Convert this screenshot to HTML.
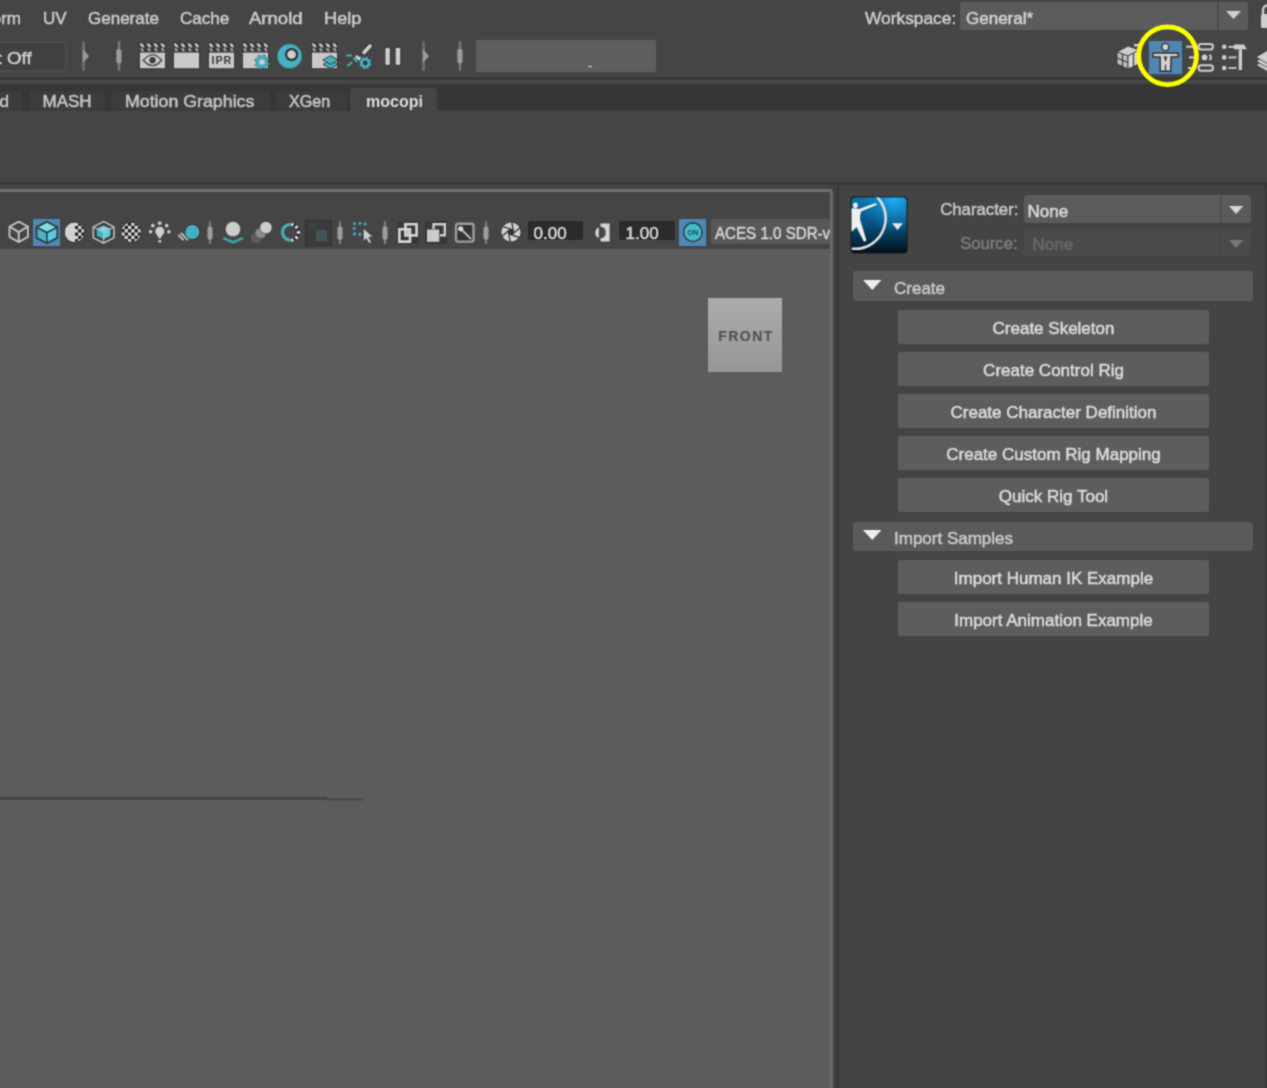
<!DOCTYPE html>
<html><head><meta charset="utf-8"><style>
html,body{margin:0;padding:0;width:1267px;height:1088px;overflow:hidden;background:#454545;}
body{position:relative;font-family:"Liberation Sans",sans-serif;}
#root{position:absolute;left:0;top:0;width:1267px;height:1088px;overflow:hidden;filter:url(#bl);}
#root>div,#root>svg{position:absolute;}
</style></head><body><svg width="0" height="0" style="position:absolute"><filter id="bl" x="0" y="0" width="100%" height="100%" color-interpolation-filters="sRGB"><feConvolveMatrix order="3" kernelMatrix="0.04 0.12 0.04 0.12 0.36 0.12 0.04 0.12 0.04" edgeMode="duplicate"/></filter></svg><div id="root">
<div style="left:0px;top:0px;width:1267px;height:77px;background:#454545;"></div>
<div style="left:0px;top:77px;width:1267px;height:3px;background:#383838;"></div>
<div style="left:0px;top:80px;width:1267px;height:4.3px;background:#464646;"></div>
<div style="left:0px;top:84.3px;width:1267px;height:26.7px;background:#373737;"></div>
<div style="left:0px;top:111px;width:1267px;height:71px;background:#454545;"></div>
<div style="left:0px;top:182px;width:1267px;height:3px;background:#383838;"></div>
<div style="left:0px;top:185px;width:1267px;height:903px;background:#444444;"></div>
<div style="left:833px;top:185px;width:434px;height:4px;background:#424242;"></div>
<div style="top:7.61px;font-size:17px;line-height:21px;color:#cbcbcb;font-weight:normal;white-space:nowrap;-webkit-text-stroke:0.5px #cbcbcb;right:1246px;">Transform</div>
<div style="top:7.61px;font-size:17px;line-height:21px;color:#cbcbcb;font-weight:normal;white-space:nowrap;-webkit-text-stroke:0.5px #cbcbcb;left:43px;">UV</div>
<div style="top:7.61px;font-size:17px;line-height:21px;color:#cbcbcb;font-weight:normal;white-space:nowrap;-webkit-text-stroke:0.5px #cbcbcb;left:88px;">Generate</div>
<div style="top:7.61px;font-size:17px;line-height:21px;color:#cbcbcb;font-weight:normal;white-space:nowrap;-webkit-text-stroke:0.5px #cbcbcb;left:180px;">Cache</div>
<div style="top:7.61px;font-size:17px;line-height:21px;color:#cbcbcb;font-weight:normal;white-space:nowrap;-webkit-text-stroke:0.5px #cbcbcb;left:249px;transform:scaleX(1.09);transform-origin:0 0;">Arnold</div>
<div style="top:7.61px;font-size:17px;line-height:21px;color:#cbcbcb;font-weight:normal;white-space:nowrap;-webkit-text-stroke:0.5px #cbcbcb;left:323.5px;transform:scaleX(1.07);transform-origin:0 0;">Help</div>
<div style="top:7.61px;font-size:17px;line-height:21px;color:#cbcbcb;font-weight:normal;white-space:nowrap;-webkit-text-stroke:0.5px #cbcbcb;left:865px;transform:scaleX(1.02);transform-origin:0 0;">Workspace:</div>
<div style="left:960px;top:1.7px;width:288px;height:28px;background:#5b5b5b;border-radius:3px;"></div>
<div style="left:1217px;top:1.7px;width:2px;height:28px;background:#4d4d4d;"></div>
<div style="top:7.61px;font-size:17px;line-height:21px;color:#d2d2d2;font-weight:normal;white-space:nowrap;-webkit-text-stroke:0.5px #d2d2d2;left:966px;">General*</div>
<svg style="left:1226px;top:11px;" width="15" height="8" viewBox="0 0 15 8"><path d="M0 0H15L7.5 8Z" fill="#d0d0d0"/></svg>
<div style="left:-6px;top:41px;width:72.6px;height:30.6px;background:#414141;border:2px solid #4b4b4b;border-radius:4px;box-sizing:border-box;"></div>
<div style="top:47.51px;font-size:17px;line-height:21px;color:#d2d2d2;font-weight:normal;white-space:nowrap;-webkit-text-stroke:0.5px #d2d2d2;left:-2px;">:</div>
<div style="top:47.51px;font-size:17px;line-height:21px;color:#d2d2d2;font-weight:normal;white-space:nowrap;-webkit-text-stroke:0.5px #d2d2d2;left:7px;transform:scaleX(1.1);transform-origin:0 0;">Off</div>
<div style="left:476px;top:40.4px;width:180px;height:32px;background:#5e5e5e;"></div>
<div style="left:-10px;top:89.7px;width:33.4px;height:21.3px;background:#3c3c3c;border-radius:3px 3px 0 0;border:1px solid #343434;border-bottom:0;box-sizing:border-box;"></div>
<div style="top:91.11px;font-size:17px;line-height:21px;color:#c6c6c6;font-weight:normal;white-space:nowrap;-webkit-text-stroke:0.5px #c6c6c6;right:1258px;">d</div>
<div style="left:27.7px;top:89.7px;width:78.1px;height:21.3px;background:#3c3c3c;border-radius:3px 3px 0 0;border:1px solid #343434;border-bottom:0;box-sizing:border-box;"></div>
<div style="top:91.11px;font-size:17px;line-height:21px;color:#c6c6c6;font-weight:normal;white-space:nowrap;-webkit-text-stroke:0.5px #c6c6c6;left:42.5px;">MASH</div>
<div style="left:110px;top:89.7px;width:161px;height:21.3px;background:#3c3c3c;border-radius:3px 3px 0 0;border:1px solid #343434;border-bottom:0;box-sizing:border-box;"></div>
<div style="top:91.11px;font-size:17px;line-height:21px;color:#c6c6c6;font-weight:normal;white-space:nowrap;-webkit-text-stroke:0.5px #c6c6c6;left:125px;transform:scaleX(1.045);transform-origin:0 0;">Motion Graphics</div>
<div style="left:275px;top:89.7px;width:72.6px;height:21.3px;background:#3c3c3c;border-radius:3px 3px 0 0;border:1px solid #343434;border-bottom:0;box-sizing:border-box;"></div>
<div style="top:91.11px;font-size:17px;line-height:21px;color:#c6c6c6;font-weight:normal;white-space:nowrap;-webkit-text-stroke:0.5px #c6c6c6;left:289px;transform:scaleX(0.95);transform-origin:0 0;">XGen</div>
<div style="left:350px;top:88px;width:87.2px;height:23px;background:#454545;border-radius:3px 3px 0 0;"></div>
<div style="top:91.95px;font-size:16px;line-height:20px;color:#dcdcdc;font-weight:bold;white-space:nowrap;left:366px;">mocopi</div>
<div style="left:0px;top:189.3px;width:833px;height:898.7px;background:#454545;"></div>
<div style="left:0px;top:189.3px;width:832px;height:2.4px;background:#6f6f6f;border-radius:0 3px 0 0;"></div>
<div style="left:830.3px;top:189.3px;width:2.7px;height:898.7px;background:#6a6a6a;border-radius:0 3px 0 0;"></div>
<div style="left:833px;top:185px;width:4.2px;height:903px;background:#414141;"></div>
<div style="left:837.2px;top:185px;width:2px;height:903px;background:#383838;"></div>
<div style="left:0px;top:249.4px;width:830.3px;height:838.6px;background:#5c5c5c;"></div>
<div style="left:0px;top:797.4px;width:326.5px;height:2.6px;background:#464646;"></div>
<div style="left:326.5px;top:798.3px;width:36.6px;height:2.6px;background:#4e4e4e;"></div>
<div style="left:708px;top:298.4px;width:73.5px;height:73.4px;background:linear-gradient(#acacac,#969696);"></div>
<div style="top:326.75px;font-size:14px;line-height:18px;color:#535353;font-weight:bold;white-space:nowrap;-webkit-text-stroke:0.2px #535353;letter-spacing:1.5px;left:246px;width:1000px;text-align:center;">FRONT</div>
<div style="left:528px;top:221.3px;width:55.2px;height:19px;background:#2b2b2b;border-radius:2px;"></div>
<div style="top:222.81px;font-size:17px;line-height:21px;color:#d6d6d6;font-weight:normal;white-space:nowrap;-webkit-text-stroke:0.5px #d6d6d6;left:533.6px;">0.00</div>
<div style="left:619px;top:221.2px;width:56px;height:19.3px;background:#2b2b2b;border-radius:2px;"></div>
<div style="top:222.81px;font-size:17px;line-height:21px;color:#d6d6d6;font-weight:normal;white-space:nowrap;-webkit-text-stroke:0.5px #d6d6d6;left:625.5px;">1.00</div>
<div style="left:679.4px;top:219px;width:27.1px;height:27px;background:#5088b3;"></div>
<div style="left:711.3px;top:219.2px;width:119px;height:24.7px;background:#585858;border-radius:3px 0 0 3px;"></div>
<div style="left:711px;top:219px;width:119.3px;height:26px;overflow:hidden;">
<div style="top:4.31px;font-size:17px;line-height:21px;color:#d4d4d4;font-weight:normal;white-space:nowrap;-webkit-text-stroke:0.5px #d4d4d4;left:4px;transform:scaleX(0.89);transform-origin:0 0;position:absolute;">ACES 1.0 SDR-video</div>
</div>
<div style="left:1265px;top:185px;width:2px;height:903px;background:#393939;"></div>
<div style="top:199.21px;font-size:17px;line-height:21px;color:#c8c8c8;font-weight:normal;white-space:nowrap;-webkit-text-stroke:0.5px #c8c8c8;right:249px;transform:scaleX(0.985);transform-origin:100% 0;">Character:</div>
<div style="top:233.11px;font-size:17px;line-height:21px;color:#7c7c7c;font-weight:normal;white-space:nowrap;-webkit-text-stroke:0.5px #7c7c7c;right:249px;transform:scaleX(0.98);transform-origin:100% 0;">Source:</div>
<div style="left:1024px;top:195px;width:226.7px;height:28.3px;background:#5b5b5b;border-radius:3px;"></div>
<div style="left:1220px;top:195px;width:2px;height:28.3px;background:#4f4f4f;"></div>
<div style="top:201.21px;font-size:17px;line-height:21px;color:#dadada;font-weight:normal;white-space:nowrap;-webkit-text-stroke:0.5px #dadada;left:1027.5px;">None</div>
<svg style="left:1229px;top:206.2px;" width="14.3" height="8" viewBox="0 0 14.3 8"><path d="M0 0H14.3L7.15 8Z" fill="#d6d6d6"/></svg>
<div style="left:1024px;top:228.6px;width:226.7px;height:27.3px;background:#4a4a4a;border-radius:3px;"></div>
<div style="left:1220px;top:228.6px;width:2px;height:27.3px;background:#474747;"></div>
<div style="top:234.41px;font-size:17px;line-height:21px;color:#686868;font-weight:normal;white-space:nowrap;-webkit-text-stroke:0.5px #686868;left:1032.5px;">None</div>
<svg style="left:1229px;top:239.5px;" width="14.3" height="8" viewBox="0 0 14.3 8"><path d="M0 0H14.3L7.15 8Z" fill="#787878"/></svg>
<div style="left:853.4px;top:271.3px;width:399.6px;height:29.3px;background:#5a5a5a;border-radius:3px;"></div>
<svg style="left:862.5px;top:279.5px;" width="18.5" height="10" viewBox="0 0 18.5 10"><path d="M0 0H18.5L9.25 10Z" fill="#eeeeee"/></svg>
<div style="top:277.61px;font-size:17px;line-height:21px;color:#cacaca;font-weight:normal;white-space:nowrap;-webkit-text-stroke:0.5px #cacaca;left:894px;">Create</div>
<div style="left:898.2px;top:310.0px;width:310.6px;height:34.2px;background:#5d5d5d;border-radius:2px;"></div>
<div style="top:318.01px;font-size:17px;line-height:21px;color:#dcdcdc;font-weight:normal;white-space:nowrap;-webkit-text-stroke:0.5px #dcdcdc;left:553.5px;width:1000px;text-align:center;">Create Skeleton</div>
<div style="left:898.2px;top:351.9px;width:310.6px;height:34.2px;background:#5d5d5d;border-radius:2px;"></div>
<div style="top:359.91px;font-size:17px;line-height:21px;color:#dcdcdc;font-weight:normal;white-space:nowrap;-webkit-text-stroke:0.5px #dcdcdc;left:553.5px;width:1000px;text-align:center;">Create Control Rig</div>
<div style="left:898.2px;top:393.8px;width:310.6px;height:34.2px;background:#5d5d5d;border-radius:2px;"></div>
<div style="top:401.81px;font-size:17px;line-height:21px;color:#dcdcdc;font-weight:normal;white-space:nowrap;-webkit-text-stroke:0.5px #dcdcdc;left:553.5px;width:1000px;text-align:center;">Create Character Definition</div>
<div style="left:898.2px;top:435.7px;width:310.6px;height:34.2px;background:#5d5d5d;border-radius:2px;"></div>
<div style="top:443.71px;font-size:17px;line-height:21px;color:#dcdcdc;font-weight:normal;white-space:nowrap;-webkit-text-stroke:0.5px #dcdcdc;left:553.5px;width:1000px;text-align:center;">Create Custom Rig Mapping</div>
<div style="left:898.2px;top:477.6px;width:310.6px;height:34.2px;background:#5d5d5d;border-radius:2px;"></div>
<div style="top:485.61px;font-size:17px;line-height:21px;color:#dcdcdc;font-weight:normal;white-space:nowrap;-webkit-text-stroke:0.5px #dcdcdc;left:553.5px;width:1000px;text-align:center;">Quick Rig Tool</div>
<div style="left:853.4px;top:521.5px;width:399.6px;height:29.3px;background:#5a5a5a;border-radius:3px;"></div>
<svg style="left:862.5px;top:529.7px;" width="18.5" height="10" viewBox="0 0 18.5 10"><path d="M0 0H18.5L9.25 10Z" fill="#eeeeee"/></svg>
<div style="top:527.81px;font-size:17px;line-height:21px;color:#cacaca;font-weight:normal;white-space:nowrap;-webkit-text-stroke:0.5px #cacaca;left:894px;">Import Samples</div>
<div style="left:898.2px;top:560.2px;width:310.6px;height:34.2px;background:#5d5d5d;border-radius:2px;"></div>
<div style="top:568.21px;font-size:17px;line-height:21px;color:#dcdcdc;font-weight:normal;white-space:nowrap;-webkit-text-stroke:0.5px #dcdcdc;left:553.5px;width:1000px;text-align:center;">Import Human IK Example</div>
<div style="left:898.2px;top:601.6px;width:310.6px;height:34.2px;background:#5d5d5d;border-radius:2px;"></div>
<div style="top:609.61px;font-size:17px;line-height:21px;color:#dcdcdc;font-weight:normal;white-space:nowrap;-webkit-text-stroke:0.5px #dcdcdc;left:553.5px;width:1000px;text-align:center;">Import Animation Example</div>
<svg style="left:81.5px;top:41.3px;" width="9" height="31" viewBox="0 0 9 31"><rect x="0" y="0" width="3" height="30" rx="1.5" fill="#6b6b6b"/><path d="M1 8 L7 15.2 L1 21.5Z" fill="#9a9a9a"/></svg>
<svg style="left:116px;top:41.3px;" width="7" height="31" viewBox="0 0 7 31"><rect x="1.8" y="0" width="2.4" height="30" rx="1.2" fill="#7a7a7a"/><rect x="0.3" y="8" width="5.2" height="14.5" rx="2" fill="#9c9c9c"/></svg>
<svg style="left:137.7px;top:41.4px;" width="29" height="29" viewBox="0 0 29 29"><g transform="translate(2,2)"><clipPath id="cb85"><rect x="0" y="-1" width="25" height="28"/></clipPath><rect x="-1" y="-1" width="27" height="27.5" rx="2" fill="#2c2c2c" opacity="0.45"/><rect x="0" y="9.6" width="25" height="15.6" fill="#c9c9c9"/><path clip-path="url(#cb85)" d="M-0.6 0.4H2.4 L4.8 4.3H1.7999999999999998Z" fill="#c9c9c9"/><path clip-path="url(#cb85)" d="M0.10000000000000009 5.3H2.8 L4.1 8.3H1.4Z" fill="#c9c9c9" opacity="0.75"/><path clip-path="url(#cb85)" d="M6.300000000000001 0.4H9.3 L11.7 4.3H8.7Z" fill="#c9c9c9"/><path clip-path="url(#cb85)" d="M7.0 5.3H9.7 L11.0 8.3H8.3Z" fill="#c9c9c9" opacity="0.75"/><path clip-path="url(#cb85)" d="M13.200000000000001 0.4H16.2 L18.6 4.3H15.600000000000001Z" fill="#c9c9c9"/><path clip-path="url(#cb85)" d="M13.9 5.3H16.6 L17.9 8.3H15.200000000000001Z" fill="#c9c9c9" opacity="0.75"/><path clip-path="url(#cb85)" d="M20.099999999999998 0.4H23.099999999999998 L25.5 4.3H22.5Z" fill="#c9c9c9"/><path clip-path="url(#cb85)" d="M20.8 5.3H23.5 L24.799999999999997 8.3H22.099999999999998Z" fill="#c9c9c9" opacity="0.75"/><path d="M3.3 17.2 Q12.5 6.5 21.7 17.2 Q12.5 28 3.3 17.2Z" fill="none" stroke="#444" stroke-width="1.4"/><circle cx="12.5" cy="17.2" r="3.1" fill="#3a3a3a"/></g></svg>
<svg style="left:172.3px;top:41.4px;" width="29" height="29" viewBox="0 0 29 29"><g transform="translate(2,2)"><clipPath id="cb86"><rect x="0" y="-1" width="25" height="28"/></clipPath><rect x="-1" y="-1" width="27" height="27.5" rx="2" fill="#2c2c2c" opacity="0.45"/><rect x="0" y="9.6" width="25" height="15.6" fill="#c9c9c9"/><path clip-path="url(#cb86)" d="M-0.6 0.4H2.4 L4.8 4.3H1.7999999999999998Z" fill="#c9c9c9"/><path clip-path="url(#cb86)" d="M0.10000000000000009 5.3H2.8 L4.1 8.3H1.4Z" fill="#c9c9c9" opacity="0.75"/><path clip-path="url(#cb86)" d="M6.300000000000001 0.4H9.3 L11.7 4.3H8.7Z" fill="#c9c9c9"/><path clip-path="url(#cb86)" d="M7.0 5.3H9.7 L11.0 8.3H8.3Z" fill="#c9c9c9" opacity="0.75"/><path clip-path="url(#cb86)" d="M13.200000000000001 0.4H16.2 L18.6 4.3H15.600000000000001Z" fill="#c9c9c9"/><path clip-path="url(#cb86)" d="M13.9 5.3H16.6 L17.9 8.3H15.200000000000001Z" fill="#c9c9c9" opacity="0.75"/><path clip-path="url(#cb86)" d="M20.099999999999998 0.4H23.099999999999998 L25.5 4.3H22.5Z" fill="#c9c9c9"/><path clip-path="url(#cb86)" d="M20.8 5.3H23.5 L24.799999999999997 8.3H22.099999999999998Z" fill="#c9c9c9" opacity="0.75"/></g></svg>
<svg style="left:206.8px;top:41.4px;" width="29" height="29" viewBox="0 0 29 29"><g transform="translate(2,2)"><clipPath id="cb87"><rect x="0" y="-1" width="25" height="28"/></clipPath><rect x="-1" y="-1" width="27" height="27.5" rx="2" fill="#2c2c2c" opacity="0.45"/><rect x="0" y="9.6" width="25" height="15.6" fill="#c9c9c9"/><path clip-path="url(#cb87)" d="M-0.6 0.4H2.4 L4.8 4.3H1.7999999999999998Z" fill="#c9c9c9"/><path clip-path="url(#cb87)" d="M0.10000000000000009 5.3H2.8 L4.1 8.3H1.4Z" fill="#c9c9c9" opacity="0.75"/><path clip-path="url(#cb87)" d="M6.300000000000001 0.4H9.3 L11.7 4.3H8.7Z" fill="#c9c9c9"/><path clip-path="url(#cb87)" d="M7.0 5.3H9.7 L11.0 8.3H8.3Z" fill="#c9c9c9" opacity="0.75"/><path clip-path="url(#cb87)" d="M13.200000000000001 0.4H16.2 L18.6 4.3H15.600000000000001Z" fill="#c9c9c9"/><path clip-path="url(#cb87)" d="M13.9 5.3H16.6 L17.9 8.3H15.200000000000001Z" fill="#c9c9c9" opacity="0.75"/><path clip-path="url(#cb87)" d="M20.099999999999998 0.4H23.099999999999998 L25.5 4.3H22.5Z" fill="#c9c9c9"/><path clip-path="url(#cb87)" d="M20.8 5.3H23.5 L24.799999999999997 8.3H22.099999999999998Z" fill="#c9c9c9" opacity="0.75"/><text x="12.9" y="21.2" text-anchor="middle" font-family="Liberation Sans" font-weight="bold" font-size="10.8" fill="#3a3a3a" letter-spacing="0.9">IPR</text></g></svg>
<svg style="left:241.2px;top:41.4px;" width="29" height="29" viewBox="0 0 29 29"><g transform="translate(2,2)"><clipPath id="cb88"><rect x="0" y="-1" width="25" height="28"/></clipPath><rect x="-1" y="-1" width="27" height="27.5" rx="2" fill="#2c2c2c" opacity="0.45"/><rect x="0" y="9.6" width="25" height="15.6" fill="#c9c9c9"/><path clip-path="url(#cb88)" d="M-0.6 0.4H2.4 L4.8 4.3H1.7999999999999998Z" fill="#c9c9c9"/><path clip-path="url(#cb88)" d="M0.10000000000000009 5.3H2.8 L4.1 8.3H1.4Z" fill="#c9c9c9" opacity="0.75"/><path clip-path="url(#cb88)" d="M6.300000000000001 0.4H9.3 L11.7 4.3H8.7Z" fill="#c9c9c9"/><path clip-path="url(#cb88)" d="M7.0 5.3H9.7 L11.0 8.3H8.3Z" fill="#c9c9c9" opacity="0.75"/><path clip-path="url(#cb88)" d="M13.200000000000001 0.4H16.2 L18.6 4.3H15.600000000000001Z" fill="#c9c9c9"/><path clip-path="url(#cb88)" d="M13.9 5.3H16.6 L17.9 8.3H15.200000000000001Z" fill="#c9c9c9" opacity="0.75"/><path clip-path="url(#cb88)" d="M20.099999999999998 0.4H23.099999999999998 L25.5 4.3H22.5Z" fill="#c9c9c9"/><path clip-path="url(#cb88)" d="M20.8 5.3H23.5 L24.799999999999997 8.3H22.099999999999998Z" fill="#c9c9c9" opacity="0.75"/><polygon points="26.45,20.51 26.01,21.93 23.92,22.31 23.18,23.21 23.20,25.33 21.88,26.03 20.14,24.82 18.98,24.93 17.49,26.45 16.07,26.01 15.69,23.92 14.79,23.18 12.67,23.20 11.97,21.88 13.18,20.14 13.07,18.98 11.55,17.49 11.99,16.07 14.08,15.69 14.82,14.79 14.80,12.67 16.12,11.97 17.86,13.18 19.02,13.07 20.51,11.55 21.93,11.99 22.31,14.08 23.21,14.82 25.33,14.80 26.03,16.12 24.82,17.86 24.93,19.02" fill="#45b1c1" stroke="#2c2c2c" stroke-opacity="0.5" stroke-width="0.8"/><circle cx="19" cy="19" r="2.6" fill="#d0d0d0"/></g></svg>
<svg style="left:276px;top:43px;" width="28" height="28" viewBox="0 0 28 28"><circle cx="13.6" cy="13.2" r="12.4" fill="#45b1c1" stroke="#2c2c2c" stroke-opacity="0.4" stroke-width="0.8"/><circle cx="15.6" cy="11.5" r="6.6" fill="#333"/><circle cx="15.6" cy="11.5" r="4.3" fill="#cfcfcf"/></svg>
<svg style="left:309.8px;top:41.4px;" width="29" height="29" viewBox="0 0 29 29"><g transform="translate(2,2)"><clipPath id="cb90"><rect x="0" y="-1" width="25" height="28"/></clipPath><rect x="-1" y="-1" width="27" height="27.5" rx="2" fill="#2c2c2c" opacity="0.45"/><rect x="0" y="9.6" width="25" height="15.6" fill="#c9c9c9"/><path clip-path="url(#cb90)" d="M-0.6 0.4H2.4 L4.8 4.3H1.7999999999999998Z" fill="#c9c9c9"/><path clip-path="url(#cb90)" d="M0.10000000000000009 5.3H2.8 L4.1 8.3H1.4Z" fill="#c9c9c9" opacity="0.75"/><path clip-path="url(#cb90)" d="M6.300000000000001 0.4H9.3 L11.7 4.3H8.7Z" fill="#c9c9c9"/><path clip-path="url(#cb90)" d="M7.0 5.3H9.7 L11.0 8.3H8.3Z" fill="#c9c9c9" opacity="0.75"/><path clip-path="url(#cb90)" d="M13.200000000000001 0.4H16.2 L18.6 4.3H15.600000000000001Z" fill="#c9c9c9"/><path clip-path="url(#cb90)" d="M13.9 5.3H16.6 L17.9 8.3H15.200000000000001Z" fill="#c9c9c9" opacity="0.75"/><path clip-path="url(#cb90)" d="M20.099999999999998 0.4H23.099999999999998 L25.5 4.3H22.5Z" fill="#c9c9c9"/><path clip-path="url(#cb90)" d="M20.8 5.3H23.5 L24.799999999999997 8.3H22.099999999999998Z" fill="#c9c9c9" opacity="0.75"/><path d="M11 21.5 L18.5 25.5 L26 21.5 L18.5 17.5Z" fill="#45b1c1" stroke="#2c2c2c" stroke-width="0.9"/><path d="M18.5 12.6 L26.2 17 L18.5 21.4 L10.8 17Z" fill="#45b1c1" stroke="#2c2c2c" stroke-width="0.9"/></g></svg>
<svg style="left:344px;top:43px;" width="30" height="28" viewBox="0 0 30 28"><line x1="26" y1="3" x2="20" y2="9.5" stroke="#333" stroke-width="5.5" stroke-linecap="round"/><line x1="26" y1="3" x2="20" y2="9.5" stroke="#cfcfcf" stroke-width="3.6" stroke-linecap="round"/><path d="M12 11.5 L18 14.5 L15.5 18.5 L10.5 14.5Z" fill="#d0d0d0" stroke="#333" stroke-width="0.8"/><line x1="3" y1="12.4" x2="7" y2="12.4" stroke="#45b1c1" stroke-width="2" stroke-linecap="round"/><line x1="10" y1="15.5" x2="12.5" y2="18" stroke="#45b1c1" stroke-width="2" stroke-linecap="round"/><line x1="4" y1="22.5" x2="7.5" y2="19.7" stroke="#45b1c1" stroke-width="2" stroke-linecap="round"/><polygon points="27.77,21.31 27.39,22.55 25.57,22.88 24.93,23.65 24.95,25.50 23.80,26.11 22.29,25.05 21.28,25.15 19.99,26.47 18.75,26.09 18.42,24.27 17.65,23.63 15.80,23.65 15.19,22.50 16.25,20.99 16.15,19.98 14.83,18.69 15.21,17.45 17.03,17.12 17.67,16.35 17.65,14.50 18.80,13.89 20.31,14.95 21.32,14.85 22.61,13.53 23.85,13.91 24.18,15.73 24.95,16.37 26.80,16.35 27.41,17.50 26.35,19.01 26.45,20.02" fill="#45b1c1" stroke="#2c2c2c" stroke-opacity="0.5" stroke-width="0.8"/><circle cx="21.3" cy="20" r="2.4" fill="#3a3a3a"/></svg>
<svg style="left:383px;top:46px;" width="20" height="21" viewBox="0 0 20 21"><rect x="1.9" y="1.4" width="5.4" height="17.9" rx="1.5" fill="#d0d0d0" stroke="#2e2e2e" stroke-width="1"/><rect x="12.1" y="1.4" width="5.7" height="17.9" rx="1.5" fill="#d0d0d0" stroke="#2e2e2e" stroke-width="1"/></svg>
<svg style="left:421.5px;top:41.3px;" width="9" height="31" viewBox="0 0 9 31"><rect x="0" y="0" width="3" height="30" rx="1.5" fill="#6b6b6b"/><path d="M1 8 L7 15.2 L1 21.5Z" fill="#9a9a9a"/></svg>
<svg style="left:456.5px;top:41.3px;" width="7" height="31" viewBox="0 0 7 31"><rect x="1.8" y="0" width="2.4" height="30" rx="1.2" fill="#7a7a7a"/><rect x="0.3" y="8" width="5.2" height="14.5" rx="2" fill="#9c9c9c"/></svg>
<div style="left:588px;top:66px;width:4px;height:1px;background:#d8d8d8;"></div>
<svg style="left:1115px;top:42px;" width="30" height="30" viewBox="0 0 30 30"><path d="M2 10 L13 4 L24 8 L13 14Z" fill="#cfcfcf" stroke="#2e2e2e" stroke-width="0.8"/><path d="M2 10 L13 14 L13 27 L2 22Z" fill="#bdbdbd" stroke="#2e2e2e" stroke-width="0.8"/><path d="M13 14 L24 8 L24 22 L13 27Z" fill="#d4d4d4" stroke="#2e2e2e" stroke-width="0.8"/><line x1="7.5" y1="12" x2="7.5" y2="24.5" stroke="#3a3a3a" stroke-width="1.2"/><line x1="2" y1="16" x2="13" y2="20.5" stroke="#3a3a3a" stroke-width="1.2"/><line x1="18.5" y1="11" x2="18.5" y2="24.5" stroke="#3a3a3a" stroke-width="1.2"/><rect x="19" y="2" width="6" height="2.4" fill="#cfcfcf"/></svg>
<div style="left:1148.8px;top:41.1px;width:33.5px;height:33.4px;background:#4f86b2;"></div>
<svg style="left:1148.8px;top:41.1px;" width="34" height="34" viewBox="0 0 34 34"><g stroke="#2f2f2f" stroke-width="1.4" fill="#d3d3d3"><circle cx="16.4" cy="6" r="3.6"/><path d="M4 12 H29 V16 H22 V23.5 H21.8 V30.3 H11.2 V23.5 V16 H4Z"/></g><line x1="16.5" y1="23.5" x2="16.5" y2="30.3" stroke="#2f2f2f" stroke-width="1.2"/><path d="M14.5 15.5 L18.5 15.5 L16.5 21Z" fill="#3a3a3a"/></svg>
<svg style="left:1185px;top:42px;" width="30" height="30" viewBox="0 0 30 30"><g stroke="#cfcfcf" stroke-width="2" fill="none"><line x1="1" y1="4.7" x2="8.5" y2="4.7"/><rect x="13.5" y="2" width="14.5" height="5.4" rx="2.7"/><line x1="4" y1="15.4" x2="9" y2="15.4"/><path d="M24.5 12.8 Q27.5 15.4 24.5 18"/><line x1="3" y1="26" x2="9" y2="26"/><rect x="13.5" y="23.3" width="14.5" height="5.4" rx="2.7"/></g><circle cx="19.5" cy="15.4" r="2.8" fill="#cfcfcf"/></svg>
<svg style="left:1220px;top:42px;" width="30" height="30" viewBox="0 0 30 30"><g fill="#cfcfcf"><circle cx="4.2" cy="4.7" r="2.3"/><circle cx="4.2" cy="15.4" r="2.3"/><circle cx="4.2" cy="26" r="2.3"/><rect x="8.5" y="4" width="6" height="1.8"/><rect x="8.5" y="14.5" width="8" height="1.8"/><rect x="8.5" y="25.1" width="8" height="1.8"/><path d="M14 2.4 H24 L27 7.3 H14Z"/><rect x="18.7" y="7.3" width="3.3" height="20.7"/></g></svg>
<svg style="left:1254px;top:42px;" width="13" height="30" viewBox="0 0 13 30"><g fill="#cfcfcf" stroke="#2e2e2e" stroke-width="0.8"><path d="M2 23 L14 16 L26 23 L14 30Z"/><path d="M2 19 L14 12 L26 19 L14 26Z"/><path d="M2 15 L14 8 L26 15 L14 22Z"/></g></svg>
<svg style="left:1259.5px;top:3px;" width="9" height="27" viewBox="0 0 9 27"><path d="M3 11 V7 A4.5 4.5 0 0 1 12 7 V11" fill="none" stroke="#cfcfcf" stroke-width="2.4"/><rect x="1" y="11" width="14" height="14" rx="1.5" fill="#cfcfcf"/></svg>
<svg style="left:1130px;top:20px;" width="76" height="72" viewBox="0 0 76 72"><circle cx="37.6" cy="35.7" r="28.9" fill="none" stroke="#ffff00" stroke-width="4.7"/></svg>
<svg style="left:4px;top:216px;" width="30" height="30" viewBox="0 0 30 30"><g fill="none" stroke="#2c2c2c" stroke-opacity="0.5" stroke-width="3.6"><polygon points="14.70,5.80 23.90,10.80 23.90,20.80 14.70,25.80 5.50,20.80 5.50,10.80"/></g><g fill="none" stroke="#c2c2c2" stroke-width="2"><polygon points="14.70,5.60 23.90,10.70 23.90,20.90 14.70,26.00 5.50,20.90 5.50,10.70"/><polyline points="5.50,10.70 14.70,16.00 23.90,10.70"/><line x1="14.7" y1="16" x2="14.7" y2="26"/></g></svg>
<div style="left:33px;top:219px;width:27px;height:27px;background:#5088b3;"></div>
<svg style="left:33px;top:219px;" width="27" height="27" viewBox="0 0 27 27"><polygon points="13.90,2.90 24.30,8.20 13.90,13.50 3.50,8.20" fill="#84dbe4"/><polygon points="3.50,8.20 13.90,13.50 13.90,24.30 3.50,19.00" fill="#46b6c6"/><polygon points="24.30,8.20 13.90,13.50 13.90,24.30 24.30,19.00" fill="#5ecbd9"/><polygon points="13.90,2.80 24.30,8.15 24.30,18.85 13.90,24.20 3.50,18.85 3.50,8.15" fill="none" stroke="#2c3a40" stroke-width="1.8"/><polyline points="3.50,8.20 13.90,13.50 24.30,8.20" fill="none" stroke="#2c3a40" stroke-width="1.6"/><line x1="13.899999999999999" y1="13.5" x2="13.899999999999999" y2="24.3" stroke="#2c3a40" stroke-width="1.6"/></svg>
<svg style="left:62px;top:220px;" width="26" height="26" viewBox="0 0 26 26"><defs><clipPath id="cc1"><circle cx="12.6" cy="12.3" r="9.7"/></clipPath></defs><circle cx="12.6" cy="12.3" r="10.7" fill="#2c2c2c" opacity="0.5"/><g clip-path="url(#cc1)"><rect x="2.9000000000000004" y="2.6000000000000014" width="19.4" height="19.4" fill="#dadada"/><rect x="2.90" y="2.60" width="3.3" height="3.3" fill="#1e1e1e"/><rect x="9.50" y="2.60" width="3.3" height="3.3" fill="#1e1e1e"/><rect x="16.10" y="2.60" width="3.3" height="3.3" fill="#1e1e1e"/><rect x="6.20" y="5.90" width="3.3" height="3.3" fill="#1e1e1e"/><rect x="12.80" y="5.90" width="3.3" height="3.3" fill="#1e1e1e"/><rect x="19.40" y="5.90" width="3.3" height="3.3" fill="#1e1e1e"/><rect x="2.90" y="9.20" width="3.3" height="3.3" fill="#1e1e1e"/><rect x="9.50" y="9.20" width="3.3" height="3.3" fill="#1e1e1e"/><rect x="16.10" y="9.20" width="3.3" height="3.3" fill="#1e1e1e"/><rect x="6.20" y="12.50" width="3.3" height="3.3" fill="#1e1e1e"/><rect x="12.80" y="12.50" width="3.3" height="3.3" fill="#1e1e1e"/><rect x="19.40" y="12.50" width="3.3" height="3.3" fill="#1e1e1e"/><rect x="2.90" y="15.80" width="3.3" height="3.3" fill="#1e1e1e"/><rect x="9.50" y="15.80" width="3.3" height="3.3" fill="#1e1e1e"/><rect x="16.10" y="15.80" width="3.3" height="3.3" fill="#1e1e1e"/><rect x="6.20" y="19.10" width="3.3" height="3.3" fill="#1e1e1e"/><rect x="12.80" y="19.10" width="3.3" height="3.3" fill="#1e1e1e"/><rect x="19.40" y="19.10" width="3.3" height="3.3" fill="#1e1e1e"/><rect x="2.9000000000000004" y="2.6000000000000014" width="10.185" height="19.4" fill="#d2d2d2"/></g></svg>
<svg style="left:90px;top:218px;" width="28" height="28" viewBox="0 0 28 28"><polygon points="13.60,3.60 23.90,8.95 23.90,19.65 13.60,25.00 3.30,19.65 3.30,8.95" fill="#3a3a3a" stroke="#b9b9b9" stroke-width="1.7"/><polygon points="13.60,5.80 22.10,10.00 13.60,14.30 5.10,10.00" fill="#7dd6e0" transform="translate(13.599999999999994 14.300000000000011) scale(0.8) translate(-13.599999999999994 -14.300000000000011)"/><polygon points="5.10,10.00 13.60,14.30 13.60,22.90 5.10,18.70" fill="#3fb3c4" transform="translate(13.599999999999994 14.300000000000011) scale(0.8) translate(-13.599999999999994 -14.300000000000011)"/><polygon points="22.10,10.00 13.60,14.30 13.60,22.90 22.10,18.70" fill="#5fd0df" transform="translate(13.599999999999994 14.300000000000011) scale(0.8) translate(-13.599999999999994 -14.300000000000011)"/><polyline points="3.30,9.00 13.60,14.30 23.90,9.00" fill="none" stroke="#b9b9b9" stroke-width="1.3"/><line x1="13.599999999999994" y1="14.300000000000011" x2="13.599999999999994" y2="25.00000000000001" stroke="#b9b9b9" stroke-width="1.3"/></svg>
<svg style="left:119px;top:220px;" width="26" height="26" viewBox="0 0 26 26"><defs><clipPath id="cc2"><circle cx="12.1" cy="12.3" r="9.8"/></clipPath></defs><circle cx="12.1" cy="12.3" r="10.8" fill="#2c2c2c" opacity="0.5"/><g clip-path="url(#cc2)"><rect x="2.299999999999999" y="2.5" width="19.6" height="19.6" fill="#dadada"/><rect x="2.30" y="2.50" width="3.3" height="3.3" fill="#1e1e1e"/><rect x="8.90" y="2.50" width="3.3" height="3.3" fill="#1e1e1e"/><rect x="15.50" y="2.50" width="3.3" height="3.3" fill="#1e1e1e"/><rect x="5.60" y="5.80" width="3.3" height="3.3" fill="#1e1e1e"/><rect x="12.20" y="5.80" width="3.3" height="3.3" fill="#1e1e1e"/><rect x="18.80" y="5.80" width="3.3" height="3.3" fill="#1e1e1e"/><rect x="2.30" y="9.10" width="3.3" height="3.3" fill="#1e1e1e"/><rect x="8.90" y="9.10" width="3.3" height="3.3" fill="#1e1e1e"/><rect x="15.50" y="9.10" width="3.3" height="3.3" fill="#1e1e1e"/><rect x="5.60" y="12.40" width="3.3" height="3.3" fill="#1e1e1e"/><rect x="12.20" y="12.40" width="3.3" height="3.3" fill="#1e1e1e"/><rect x="18.80" y="12.40" width="3.3" height="3.3" fill="#1e1e1e"/><rect x="2.30" y="15.70" width="3.3" height="3.3" fill="#1e1e1e"/><rect x="8.90" y="15.70" width="3.3" height="3.3" fill="#1e1e1e"/><rect x="15.50" y="15.70" width="3.3" height="3.3" fill="#1e1e1e"/><rect x="5.60" y="19.00" width="3.3" height="3.3" fill="#1e1e1e"/><rect x="12.20" y="19.00" width="3.3" height="3.3" fill="#1e1e1e"/><rect x="18.80" y="19.00" width="3.3" height="3.3" fill="#1e1e1e"/></g></svg>
<svg style="left:146px;top:219px;" width="26" height="26" viewBox="0 0 26 26"><g fill="#cfcfcf" stroke="#2c2c2c" stroke-opacity="0.5" stroke-width="0.8"><circle cx="6.8" cy="6.7" r="2.1"/><circle cx="13.8" cy="4.2" r="2.1"/><circle cx="20.7" cy="6.7" r="2.1"/><circle cx="4.6" cy="12.7" r="2"/><circle cx="22.9" cy="12.7" r="2"/><path d="M13.8 7.5 A4.8 4.8 0 0 1 18.6 12.3 C18.6 15 15.5 17 14.6 20 H13 C12.1 17 9 15 9 12.3 A4.8 4.8 0 0 1 13.8 7.5Z"/><rect x="12" y="21" width="3.6" height="2.8" rx="0.8"/></g></svg>
<svg style="left:175px;top:222px;" width="27" height="22" viewBox="0 0 27 22"><g stroke="#b8b8b8" stroke-width="2.2" stroke-linecap="round"><line x1="4" y1="13.5" x2="8" y2="17.5"/><line x1="6.5" y1="11.5" x2="12.5" y2="17.5"/></g><circle cx="17.3" cy="10" r="7.6" fill="#47b0bf" stroke="#2e2a2a" stroke-opacity="0.7" stroke-width="1.2"/></svg>
<svg style="left:206px;top:220.6px;" width="8" height="23.400000000000006" viewBox="0 0 8 23.400000000000006"><rect x="2.9" y="0" width="2.2" height="23.400000000000006" rx="1.1" fill="#808080"/><rect x="1.5" y="5.400000000000006" width="5" height="13.300000000000011" rx="2" fill="#9e9e9e"/></svg>
<svg style="left:220px;top:218px;" width="26" height="28" viewBox="0 0 26 28"><path d="M3.3 20 L13 24.4 L23 20" fill="none" stroke="#3fa9b8" stroke-width="2.4" stroke-linejoin="round"/><circle cx="13" cy="11.2" r="7.6" fill="#cdcdcd" stroke="#2e2e2e" stroke-opacity="0.5" stroke-width="0.8"/><path d="M9 17.5 L11 21 L12.5 17.8 L14.5 21 L16 17.6" fill="none" stroke="#555" stroke-width="0.9"/></svg>
<svg style="left:248px;top:218px;" width="27" height="28" viewBox="0 0 27 28"><circle cx="8.4" cy="19.7" r="5.6" fill="#5d5d5d"/><circle cx="12.8" cy="15" r="5.6" fill="#8c8c8c" stroke="#2e2e2e" stroke-opacity="0.5" stroke-width="0.8"/><circle cx="17.9" cy="9.6" r="6.2" fill="#cecece" stroke="#2e2e2e" stroke-opacity="0.6" stroke-width="1"/></svg>
<svg style="left:279px;top:221px;" width="24" height="24" viewBox="0 0 24 24"><path d="M11.5 3.3 A8 8 0 0 0 11.5 19.3" fill="none" stroke="#46b1c0" stroke-width="3.2"/><g fill="#e6e6e6"><circle cx="13.5" cy="3.6" r="1.6"/><circle cx="17.5" cy="6" r="1.6"/><circle cx="19.5" cy="11.3" r="1.6"/><circle cx="17.5" cy="16.6" r="1.6"/><circle cx="13.5" cy="19" r="1.6"/></g><g fill="#1e1e1e"><circle cx="15.5" cy="4.3" r="1.2"/><circle cx="19" cy="8.6" r="1.2"/><circle cx="19" cy="14" r="1.2"/><circle cx="15.5" cy="18.3" r="1.2"/></g></svg>
<div style="left:305.4px;top:219.7px;width:26.2px;height:25.9px;background:#3b3b3b;border:1.5px solid #323232;box-sizing:border-box;"></div>
<div style="left:315.8px;top:230.1px;width:11.3px;height:11px;background:#44555a;"></div>
<div style="left:309px;top:223px;width:7px;height:7px;background:#3d4345;"></div>
<svg style="left:335.8px;top:220.6px;" width="8" height="23.400000000000006" viewBox="0 0 8 23.400000000000006"><rect x="2.9" y="0" width="2.2" height="23.400000000000006" rx="1.1" fill="#808080"/><rect x="1.5" y="5.400000000000006" width="5" height="13.300000000000011" rx="2" fill="#9e9e9e"/></svg>
<svg style="left:350px;top:220px;" width="26" height="26" viewBox="0 0 26 26"><g fill="#3fb0c0"><circle cx="4.4" cy="3.6" r="1.5"/><circle cx="10" cy="3.2" r="1.5"/><circle cx="15" cy="3.8" r="1.5"/><circle cx="4.2" cy="8.5" r="1.4"/><circle cx="4.4" cy="13.9" r="1.6"/><circle cx="9.8" cy="14.2" r="1.5"/></g><path d="M13.5 8.5 L13.5 21 L16.3 18.5 L19.3 23.5 L21.3 22.2 L18.6 17.3 L22.6 16.7Z" fill="#cfcfcf" stroke="#2e2e2e" stroke-opacity="0.5" stroke-width="0.8"/></svg>
<svg style="left:380.5px;top:220.6px;" width="8" height="23.400000000000006" viewBox="0 0 8 23.400000000000006"><rect x="2.9" y="0" width="2.2" height="23.400000000000006" rx="1.1" fill="#808080"/><rect x="1.5" y="5.400000000000006" width="5" height="13.300000000000011" rx="2" fill="#9e9e9e"/></svg>
<div style="left:397.1px;top:221px;width:21.5px;height:22.7px;background:#383838;"></div>
<svg style="left:397px;top:221px;" width="22" height="23" viewBox="0 0 22 23"><rect x="8.4" y="3.2" width="11.2" height="11.2" fill="none" stroke="#d6d6d6" stroke-width="2.6"/><path d="M2.4 8.2 H13 V20.6 H2.4Z" fill="none" stroke="#d6d6d6" stroke-width="2.6"/><rect x="9.5" y="9.3" width="3.5" height="3.5" fill="#cfcfcf"/></svg>
<div style="left:425.4px;top:221px;width:21.7px;height:22.7px;background:#383838;"></div>
<svg style="left:425px;top:221px;" width="22" height="23" viewBox="0 0 22 23"><path d="M8.5 8 V3.2 H19.8 V14.2 H15" fill="none" stroke="#cfcfcf" stroke-width="2.4"/><rect x="2" y="8.5" width="12.3" height="12.3" fill="#cbcbcb"/></svg>
<svg style="left:454px;top:222px;" width="22" height="22" viewBox="0 0 22 22"><rect x="2" y="1.8" width="17.5" height="17.8" rx="2" fill="#333" stroke="#9e9e9e" stroke-width="2.4"/><line x1="6.5" y1="6.5" x2="17" y2="17" stroke="#bdbdbd" stroke-width="2"/><circle cx="6.7" cy="6.8" r="2.6" fill="#d6d6d6"/></svg>
<svg style="left:482px;top:220.6px;" width="8" height="23.400000000000006" viewBox="0 0 8 23.400000000000006"><rect x="2.9" y="0" width="2.2" height="23.400000000000006" rx="1.1" fill="#808080"/><rect x="1.5" y="5.400000000000006" width="5" height="13.300000000000011" rx="2" fill="#9e9e9e"/></svg>
<svg style="left:500px;top:221.3px;" width="22" height="22" viewBox="0 0 22 22"><circle cx="11" cy="11" r="10.2" fill="#2e2e2e" opacity="0.5"/><circle cx="11" cy="11" r="9.6" fill="#d2d2d2"/><line x1="11" y1="11" x2="20.80" y2="11.00" stroke="#333" stroke-width="1.3" transform="rotate(20 11 11) translate(0.00 2.50)"/><line x1="11" y1="11" x2="15.90" y2="19.49" stroke="#333" stroke-width="1.3" transform="rotate(20 11 11) translate(-2.17 1.25)"/><line x1="11" y1="11" x2="6.10" y2="19.49" stroke="#333" stroke-width="1.3" transform="rotate(20 11 11) translate(-2.17 -1.25)"/><line x1="11" y1="11" x2="1.20" y2="11.00" stroke="#333" stroke-width="1.3" transform="rotate(20 11 11) translate(-0.00 -2.50)"/><line x1="11" y1="11" x2="6.10" y2="2.51" stroke="#333" stroke-width="1.3" transform="rotate(20 11 11) translate(2.17 -1.25)"/><line x1="11" y1="11" x2="15.90" y2="2.51" stroke="#333" stroke-width="1.3" transform="rotate(20 11 11) translate(2.17 1.25)"/><circle cx="11" cy="11" r="3" fill="#333"/></svg>
<svg style="left:592px;top:222px;" width="20" height="22" viewBox="0 0 20 22"><path d="M8.5 1.5 H17.6 V19.6 H8.5 V16.5 A6 6 0 0 0 8.5 4.6Z" fill="#d6d6d6"/><path d="M6.8 5.6 A5.6 5.6 0 0 0 6.8 16" fill="#d6d6d6"/><path d="M4 6.5 A5 5 0 0 0 4 15" fill="none"/></svg>
<svg style="left:679.4px;top:219px;" width="27.1" height="27" viewBox="0 0 27.1 27"><circle cx="13.9" cy="13.2" r="9.3" fill="#43bcc9" stroke="#2f3f44" stroke-width="1.6"/><text x="13.9" y="16" text-anchor="middle" font-family="Liberation Sans" font-weight="bold" font-size="7.5" fill="#1f4a50">ON</text></svg>
<svg style="left:850px;top:196px;" width="58" height="58" viewBox="0 0 58 58"><defs><linearGradient id="hg" x1="0" y1="0" x2="0" y2="1"><stop offset="0" stop-color="#0c74b0"/><stop offset="0.5" stop-color="#07507c"/><stop offset="1" stop-color="#02131d"/></linearGradient>
<radialGradient id="hr" cx="0.78" cy="0.02" r="0.62"><stop offset="0" stop-color="#1cb4ff" stop-opacity="0.95"/><stop offset="0.6" stop-color="#1aa0e0" stop-opacity="0.35"/><stop offset="1" stop-color="#1aa0e0" stop-opacity="0"/></radialGradient></defs>
<clipPath id="hclip"><rect x="1.5" y="1.5" width="55" height="55" rx="3.5"/></clipPath><rect x="0.5" y="0.5" width="57" height="57" rx="4" fill="#141414"/>
<rect x="1.5" y="1.5" width="55" height="55" rx="3.5" fill="url(#hg)"/>
<rect x="1.5" y="1.5" width="55" height="55" rx="3.5" fill="url(#hr)"/>
<path d="M21.30 -3.75 A30.6 30.6 0 0 1 2.41 52.68" fill="none" stroke="#e0e0e0" stroke-width="2.6" stroke-linecap="round" clip-path="url(#hclip)"/><g fill="#f0f0f0"><ellipse cx="5.4" cy="9.2" rx="2.4" ry="2.8"/><path d="M1.5 12.5 Q5 12 9 13 L25.8 7 L26.5 8.9 L11 15.5 Q9.6 20 10.2 24 L16.4 44.3 Q15.5 46 13.8 45.5 L6.5 31 L4.5 33 L1.5 36Z"/></g><path d="M42 27.3 H52.9 L47.45 33.9Z" fill="#e8e8e8"/></svg>
</div></body></html>
